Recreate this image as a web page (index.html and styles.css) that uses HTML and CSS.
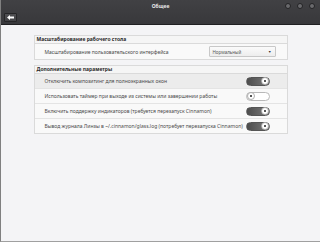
FILE: index.html
```html
<!DOCTYPE html>
<html lang="ru">
<head>
  <meta charset="UTF-8">
  <meta name="viewport" content="width=device-width, initial-scale=1.0">
  <title>Общее</title>
  <link rel="stylesheet" href="styles.css">
</head>
<body>

  <div class="window">
    <div class="titlebar">
      <div class="title-row">
        <span class="title">Общее</span>
        <div class="controls">
          <span class="ctl"></span>
          <span class="ctl"></span>
          <span class="ctl"></span>
        </div>
      </div>
      <div class="toolbar">
        <button class="back">
          <svg width="7" height="5" viewBox="0 0 7 5"><path d="M0 2.5 L3 0 L3 1.6 L7 1.6 L7 3.4 L3 3.4 L3 5 Z" fill="#fff"/></svg>
        </button>
      </div>
    </div>

    <div class="content">
      <div class="group">
        <div class="group-head">Масштабирование рабочего стола</div>
        <div class="row row-tall">
          <span class="label">Масштабирование пользовательского интерфейса</span>
          <div class="combo">
            <span>Нормальный</span>
            <span class="combo-arrow">▼</span>
          </div>
        </div>
      </div>

      <div class="group">
        <div class="group-head">Дополнительные параметры</div>
        <div class="row active">
          <span class="label">Отключить композитинг для полноэкранных окон</span>
          <span class="switch on"></span>
        </div>
        <div class="row">
          <span class="label">Использовать таймер при выходе из системы или завершении работы</span>
          <span class="switch"></span>
        </div>
        <div class="row">
          <span class="label">Включить поддержку индикаторов (требуется перезапуск Cinnamon)</span>
          <span class="switch on"></span>
        </div>
        <div class="row">
          <span class="label">Вывод журнала Линзы в ~/.cinnamon/glass.log (потребует перезапуска Cinnamon)</span>
          <span class="switch on"></span>
        </div>
      </div>
    </div>
  </div>

</body>
</html>
```

FILE: styles.css
```css
body {
  margin: 0;
  font-family: 'Noto Sans', sans-serif;
  background-color: #f4f4f6;
}

.window {
  width: 319px;
  height: 241px;
  border-left: 1px solid #808080;
  border-bottom: 1px solid #a0a0a0;
  background-color: #f4f4f6;
  display: flex;
  flex-direction: column;
}

.titlebar {
  height: 24px;
  background: linear-gradient(#414144, #38383b);
  border-bottom: 1px solid #202022;
  display: flex;
  flex-direction: column;
}

.title-row {
  height: 12px;
  display: flex;
  align-items: center;
  justify-content: center;
  position: relative;
}

.title {
  color: #e8e8e8;
  font-size: 5px;
  font-weight: bold;
}

.controls {
  position: absolute;
  right: 5px;
  top: 3px;
  display: flex;
  gap: 6px;
}

.ctl {
  width: 4px;
  height: 4px;
  border-radius: 50%;
  background-color: #6a6a6d;
  border: 0.5px solid #232325;
}

.toolbar {
  padding: 1px 3px;
}

.back {
  width: 13px;
  height: 9px;
  padding: 0;
  border: 1px solid #262628;
  border-radius: 1px;
  background: linear-gradient(#4e4e51, #444447);
  display: flex;
  align-items: center;
  justify-content: center;
}

.content {
  padding-top: 10px;
  display: flex;
  flex-direction: column;
  align-items: center;
  gap: 5px;
}

.group {
  width: 252px;
  border: 1px solid #dadada;
  background-color: #f9f9f9;
}

.group-head {
  height: 7px;
  line-height: 7px;
  padding-left: 2px;
  font-size: 5px;
  font-weight: bold;
  color: #2a2a2a;
  background-color: #f5f5f5;
  border-bottom: 1px solid #dadada;
}

.row {
  height: 14px;
  padding: 0 11px 0 10px;
  display: flex;
  align-items: center;
  justify-content: space-between;
  border-bottom: 1px solid #e4e4e4;
}

.row:last-child {
  border-bottom: none;
}

.row-tall {
  height: 15px;
}

.row.active {
  background-color: #ececec;
}

.label {
  font-size: 5px;
  color: #4a4a4a;
}

.combo {
  width: 59px;
  height: 9px;
  padding: 0 3px;
  border: 1px solid #c8c8c8;
  border-radius: 1px;
  background: linear-gradient(#fbfbfb, #ededed);
  display: flex;
  align-items: center;
  justify-content: space-between;
  font-size: 4.5px;
  color: #555;
}

.combo-arrow {
  font-size: 3.5px;
  color: #333;
}

.switch {
  width: 24px;
  height: 9px;
  margin-right: 6px;
  border-radius: 5px;
  border: 0.5px solid #b8b8b8;
  background-color: #fff;
  display: flex;
  align-items: center;
  box-sizing: border-box;
}

.switch::after {
  content: '';
  width: 8px;
  height: 8px;
  border-radius: 50%;
  background: radial-gradient(circle, #555 0 0.8px, #fff 1px);
  border: 0.5px solid #b0b0b0;
  box-sizing: border-box;
}

.switch.on {
  background: linear-gradient(90deg, #4c4c4c, #7c7c7c);
  border-color: #555;
  justify-content: flex-end;
}
```
